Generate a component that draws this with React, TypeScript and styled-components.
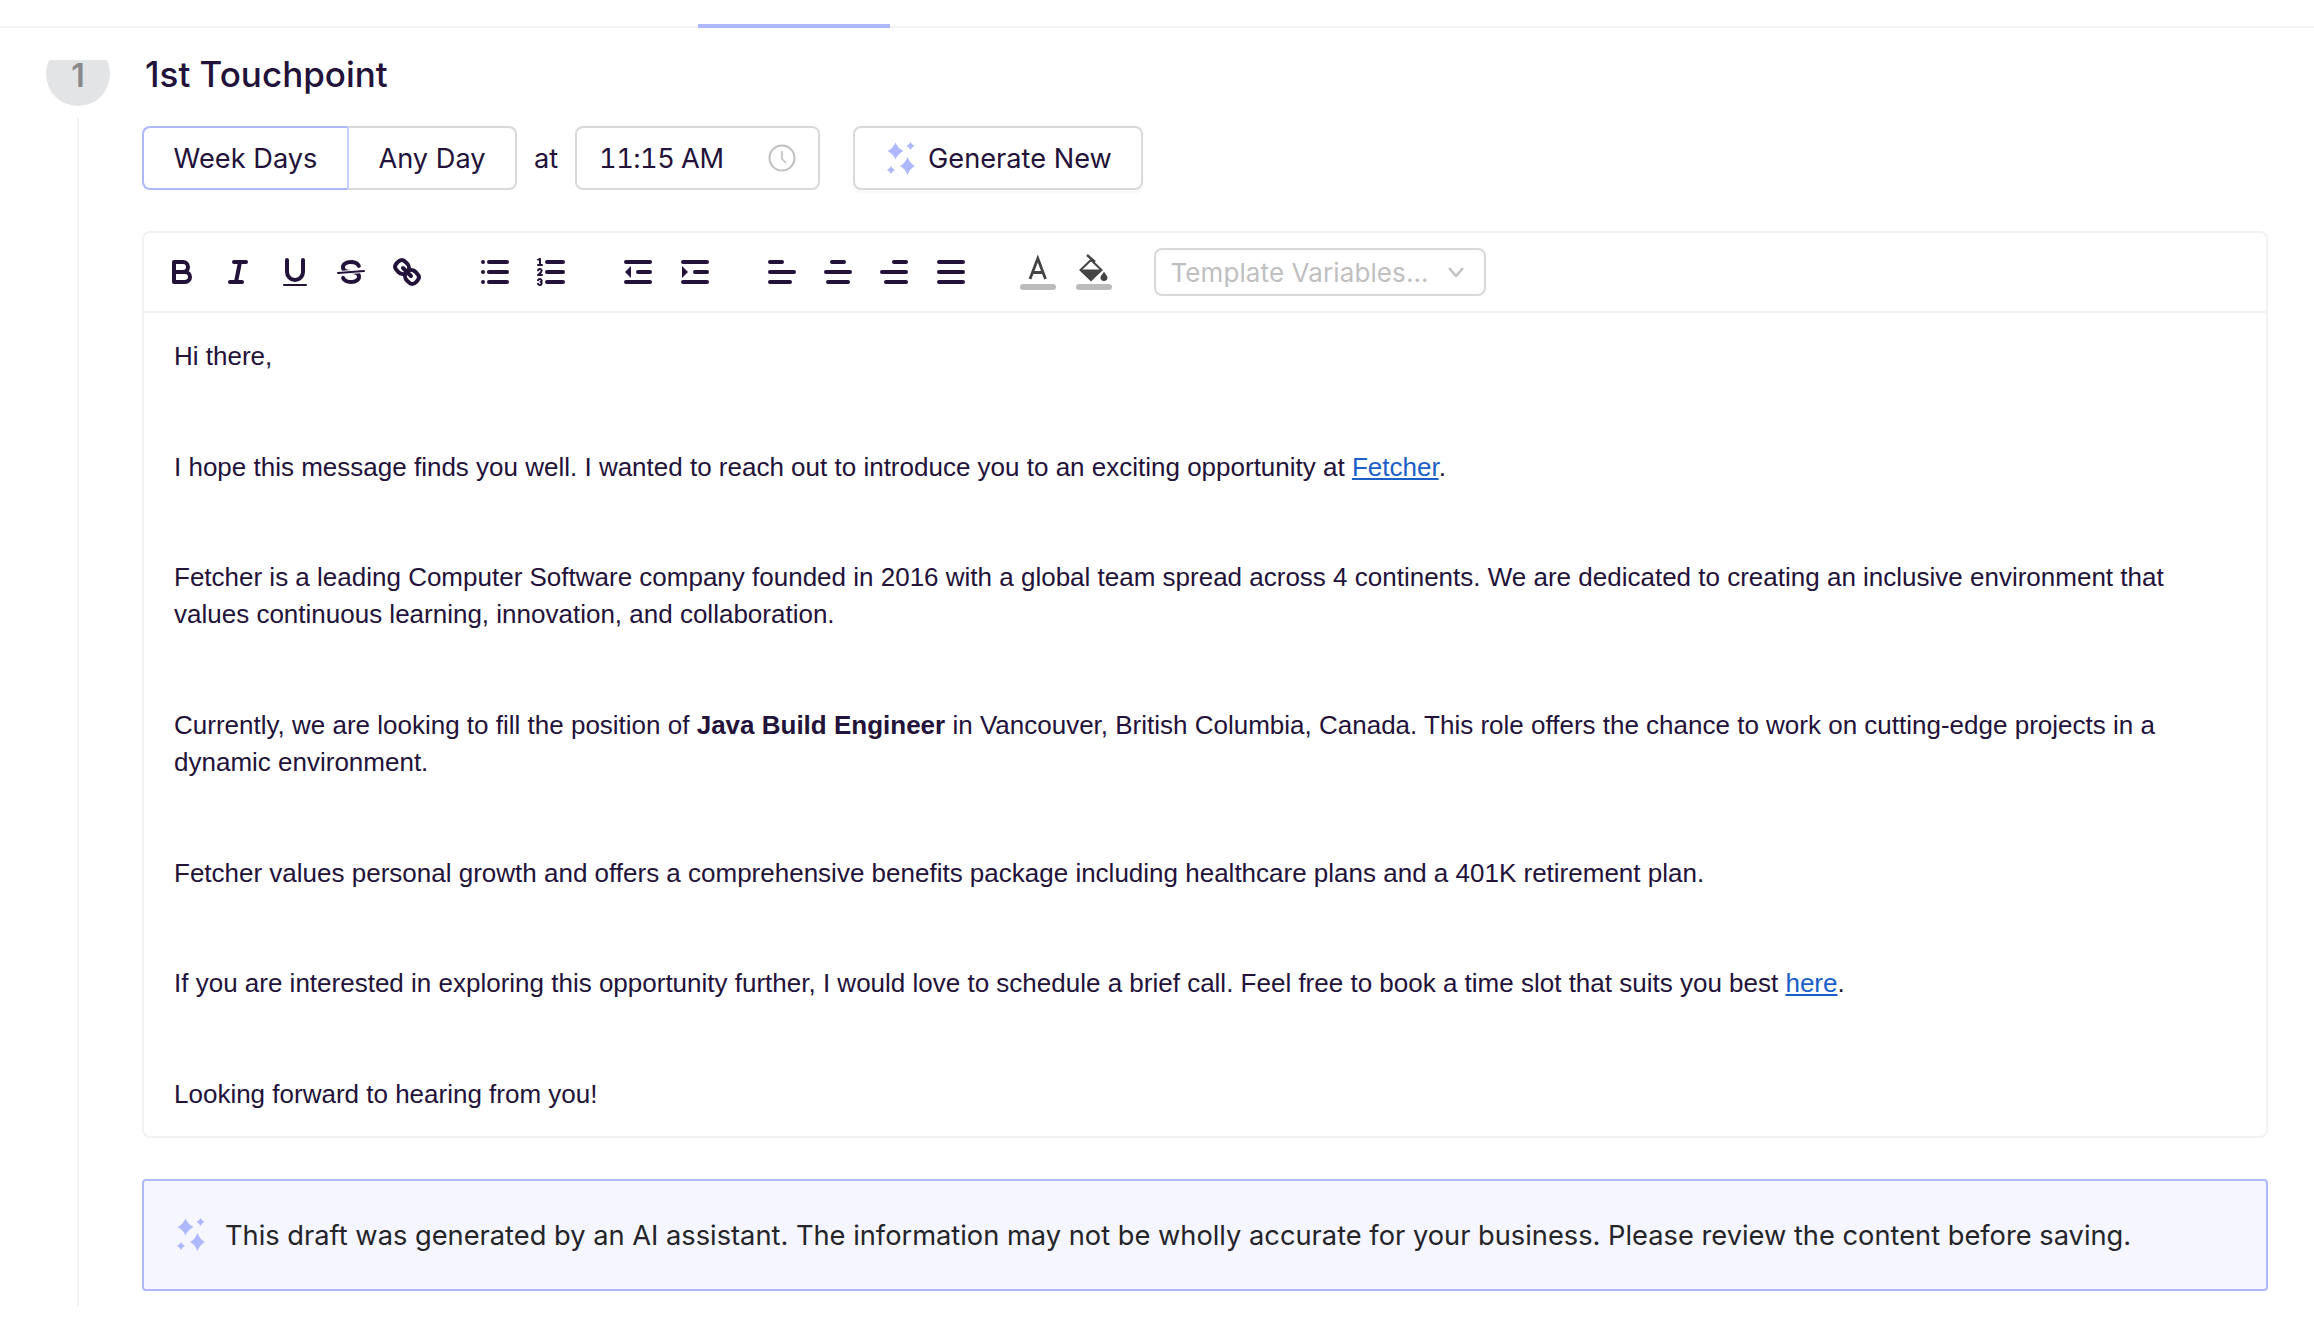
import styled, { createGlobalStyle } from 'styled-components'
import type React from 'react'

/**
 * Constants
 */
const INK = '#231239'
const PERIWINKLE = '#adb8ff'
const HAIRLINE = '#f2f2f2'
const CONTROL_BORDER = '#d9d9d9'

/**
 * Style
 */
const GlobalStyle = createGlobalStyle`
  html, body {
    margin: 0;
    padding: 0;
    background: #fff;
  }

  * {
    box-sizing: border-box;
  }
`

const Page = styled.div`
  width: 2314px;
  height: 1334px;
  overflow: hidden;
  font-family: Inter, "Liberation Sans", sans-serif;
  color: ${INK};
`

const TopBar = styled.div`
  position: relative;
  height: 28px;
  border-bottom: 2px solid ${HAIRLINE};
`

const ActiveTab = styled.div`
  position: absolute;
  left: 698px;
  bottom: -2px;
  width: 192px;
  height: 4px;
  background: ${PERIWINKLE};
`

const Step = styled.section`
  display: flex;
  gap: 32px;
  padding: 24px 46px 0 46px;
`

const Timeline = styled.div`
  display: flex;
  flex-direction: column;
  align-items: center;
  width: 64px;
  padding-top: 8px;
`

const BadgeClip = styled.div`
  width: 64px;
  height: 46px;
  overflow: hidden;
`

const Badge = styled.div`
  display: flex;
  align-items: center;
  justify-content: center;
  width: 64px;
  height: 64px;
  margin-top: -18px;
  padding-top: 2px;
  border-radius: 50%;
  background: #e3e4e6;
  color: #89898c;
  font-size: 32px;
  font-weight: 600;
`

const Rail = styled.div`
  width: 2px;
  height: 1188px;
  margin-top: 12px;
  background: ${HAIRLINE};
`

const Main = styled.div`
  flex: 1;
  min-width: 0;
`

const Title = styled.h2`
  margin: 0 0 30px;
  padding-left: 3px;
  font-size: 35px;
  font-weight: 500;
  line-height: 44px;
`

const Controls = styled.div`
  display: flex;
  align-items: center;
  height: 64px;
  font-size: 27.2px;
`

const Segments = styled.div`
  display: flex;
  height: 64px;
`

const Segment = styled.div<{ $active?: boolean }>`
  display: flex;
  align-items: center;
  justify-content: center;
  border: 2px solid ${props => (props.$active ? PERIWINKLE : CONTROL_BORDER)};
  border-left-width: ${props => (props.$active ? '2px' : '0')};
  border-right-color: ${props => (props.$active ? '#c6cfff' : CONTROL_BORDER)};
  border-radius: ${props => (props.$active ? '8px 0 0 8px' : '0 8px 8px 0')};
  width: ${props => (props.$active ? '207px' : '168px')};
`

const AtLabel = styled.span`
  width: 58px;
  text-align: center;
`

const TimeField = styled.div`
  display: flex;
  align-items: center;
  justify-content: space-between;
  width: 245px;
  height: 64px;
  padding: 0 22px;
  border: 2px solid ${CONTROL_BORDER};
  border-radius: 8px;
  font-variant-numeric: tabular-nums;
  letter-spacing: -0.5px;
`

const GenerateButton = styled.div`
  display: flex;
  align-items: center;
  gap: 13px;
  width: 290px;
  height: 64px;
  margin-left: 33px;
  padding-left: 32px;
  border: 2px solid ${CONTROL_BORDER};
  border-radius: 8px;
  box-shadow: 0 4px 0 rgba(0, 0, 0, 0.02);
`

const Editor = styled.div`
  margin-top: 41px;
  border: 2px solid ${HAIRLINE};
  border-radius: 8px;
`

const Toolbar = styled.div`
  display: flex;
  align-items: center;
  gap: 31px;
  height: 80px;
  padding: 0 10px;
  border-bottom: 2px solid ${HAIRLINE};
`

const ToolGroup = styled.div`
  display: flex;
`

const ToolButton = styled.div`
  display: flex;
  justify-content: center;
  width: 56.3px;
  height: 48px;
  padding-top: 6px;
`

const QuillIcon = styled.svg`
  width: 36px;
  height: 36px;
  fill: none;
  stroke: ${INK};
  stroke-width: 2;
  stroke-linecap: round;
  stroke-linejoin: round;
`

const Filled = styled.path`
  fill: ${INK};
  stroke: none;
`

const VariableSelect = styled.div`
  display: flex;
  align-items: center;
  justify-content: space-between;
  width: 332px;
  height: 48px;
  margin-left: 1px;
  padding: 0 19px 0 14px;
  border: 2px solid ${CONTROL_BORDER};
  border-radius: 8px;
  color: #bfbfbf;
  font-size: 26px;
  letter-spacing: 0.1px;
`

const Body = styled.div`
  padding: 25px 30px 23px 30px;
  font-family: "Liberation Sans", Arial, sans-serif;
  font-size: 26px;
  line-height: 36.9px;
`

const Para = styled.p`
  margin: 0 0 73.8px;

  &:last-child {
    margin-bottom: 0;
  }

  a {
    color: #1a5fc8;
    text-decoration: underline;
  }
`

const Notice = styled.div`
  display: flex;
  align-items: center;
  gap: 20px;
  height: 112px;
  margin-top: 41px;
  padding-left: 33px;
  border: 2px solid ${PERIWINKLE};
  border-radius: 4px;
  background: #f5f6ff;
  color: #242429;
  font-size: 27.25px;
`

const NoticeText = styled.span`
  padding-top: 2px;
`

/**
 * Icons
 */
const Sparkles = (): React.JSX.Element => (
  <svg width="28" height="33" viewBox="0 0 28 33" fill={PERIWINKLE}>
    <path d="M8.500 0.500 Q11 6.500 16.500 9 Q11 11.500 8.500 17.500 Q6 11.500 0.500 9 Q6 6.500 8.500 0.500Z" />
    <path d="M23.500 0 Q24.700 2.800 27.500 4 Q24.700 5.200 23.500 8 Q22.300 5.200 19.500 4 Q22.300 2.800 23.500 0Z" />
    <path d="M20.500 15 Q23 21.500 28 24 Q23 26.500 20.500 33 Q18 26.500 13 24 Q18 21.500 20.500 15Z" />
    <path d="M4 24 Q5.200 26.800 8 28 Q5.200 29.200 4 32 Q2.800 29.200 0 28 Q2.800 26.800 4 24Z" />
  </svg>
)

const Clock = (): React.JSX.Element => (
  <svg width="28" height="28" viewBox="0 0 28 28" fill="none" stroke="#bfbfbf" strokeWidth="2">
    <circle cx="14" cy="14" r="12.5" />
    <path d="M14 7v8l4 4" strokeWidth="1.6" />
  </svg>
)

const Chevron = (): React.JSX.Element => (
  <svg width="18" height="12" viewBox="0 0 18 12" fill="none" stroke="#bfbfbf" strokeWidth="2.4">
    <path d="M2 2l7 8 7-8" />
  </svg>
)

const TextColorIcon = (): React.JSX.Element => (
  <svg width="36" height="40" viewBox="0 0 36 40">
    <path d="M10 25L17.800 4.500L25.500 25M12.500 18.500H23" fill="none" stroke="#444" strokeWidth="2.800" />
    <rect x="0" y="30" width="36" height="6" rx="3" fill="#bbb" />
  </svg>
)

const FillColorIcon = (): React.JSX.Element => (
  <svg width="36" height="40" viewBox="0 0 36 40">
    <path d="M11 1L19 8" stroke="#444" strokeWidth="2.400" fill="none" />
    <path d="M15 6L25.500 16L15 26L4.500 16Z" fill="#fff" stroke="#444" strokeWidth="2" />
    <path d="M4.500 15.500H25.500L15 26Z" fill="#444" />
    <path d="M28 17.500C29.500 20.500 31.500 21.500 31.500 23.500A3.500 3.500 0 0 1 24.500 23.500C24.500 21.500 26.500 20.500 28 17.500Z" fill="#444" />
    <rect x="0" y="30" width="36" height="6" rx="3" fill="#bbb" />
  </svg>
)

const hLine = (x1: number, x2: number, y: number): React.JSX.Element => (
  <line key={`${x1}-${x2}-${y}`} x1={x1} x2={x2} y1={y} y2={y} />
)

const icons: Record<string, React.ReactNode> = {
  bold: (
    <>
      <path d="M5,4H9.5A2.5,2.5,0,0,1,12,6.5v0A2.5,2.5,0,0,1,9.5,9H5A0,0,0,0,1,5,9V4A0,0,0,0,1,5,4Z" />
      <path d="M5,9h5.500A2.500,2.500,0,0,1,13,11.500v0A2.500,2.500,0,0,1,10.500,14H5a0,0,0,0,1,0,0V9A0,0,0,0,1,5,9Z" />
    </>
  ),
  italic: (
    <>
      {hLine(7, 13, 4)}
      {hLine(5, 11, 14)}
      <line x1="8" x2="10" y1="14" y2="4" />
    </>
  ),
  underline: (
    <>
      <path d="M5,3V9a4.012,4.012,0,0,0,4,4H9a4.012,4.012,0,0,0,4-4V3" />
      <Filled as="rect" x="3" y="15" width="12" height="1" rx="0.5" />
    </>
  ),
  strike: (
    <>
      <line x1="15.5" x2="2.5" y1="8.5" y2="9.5" strokeWidth="1" />
      <Filled d="M9.007,8C6.542,7.791,6,7.519,6,6.5,6,5.792,7.283,5,9,5c1.571,0,2.765.679,2.969,1.309a1,1,0,0,0,1.9-.617C13.356,4.106,11.354,3,9,3,6.2,3,4,4.538,4,6.5a3.2,3.2,0,0,0,.5,1.843Z" />
      <Filled d="M8.984,10C11.457,10.208,12,10.479,12,11.5c0,.708-1.283,1.5-3,1.5-1.571,0-2.765-.679-2.969-1.309a1,1,0,1,0-1.9.617C4.644,13.894,6.646,15,9,15c2.8,0,5-1.538,5-3.5a3.2,3.2,0,0,0-.5-1.843Z" />
    </>
  ),
  link: (
    <>
      <line x1="7" x2="11" y1="7" y2="11" />
      <path d="M8.9,4.577a3.476,3.476,0,0,1,.36,4.679A3.476,3.476,0,0,1,4.577,8.9C3.185,7.5,2.035,6.4,4.217,4.217S7.5,3.185,8.9,4.577Z" />
      <path d="M13.423,9.1a3.476,3.476,0,0,0-4.679-.36,3.476,3.476,0,0,0,.36,4.679c1.392,1.392,2.5,2.542,4.679.36S14.815,10.5,13.423,9.1Z" />
    </>
  ),
  bullet: (
    <>
      {hLine(6, 15, 4)}
      {hLine(6, 15, 9)}
      {hLine(6, 15, 14)}
      {hLine(3, 3, 4)}
      {hLine(3, 3, 9)}
      {hLine(3, 3, 14)}
    </>
  ),
  ordered: (
    <>
      {hLine(7, 15, 4)}
      {hLine(7, 15, 9)}
      {hLine(7, 15, 14)}
      <line x1="2.5" x2="4.5" y1="5.5" y2="5.5" strokeWidth="1" />
      <Filled d="M3.5,6A0.5,0.5,0,0,1,3,5.5V3.085l-0.276.138A0.5,0.5,0,0,1,2.053,3c-0.124-.247-0.023-0.324.224-0.447l1-.5A0.5,0.5,0,0,1,4,2.5v3A0.5,0.5,0,0,1,3.5,6Z" />
      <path strokeWidth="1" d="M4.5,10.5h-2c0-.234,1.85-1.076,1.85-2.234A0.959,0.959,0,0,0,2.5,8.156" />
      <path strokeWidth="1" d="M2.5,14.846a0.959,0.959,0,0,0,1.85-.109A0.7,0.7,0,0,0,3.75,14a0.688,0.688,0,0,0,.6-0.736,0.959,0.959,0,0,0-1.85-.109" />
    </>
  ),
  outdent: (
    <>
      {hLine(3, 15, 14)}
      {hLine(3, 15, 4)}
      {hLine(9, 15, 9)}
      <Filled as="polygon" points="5.500 6 5.500 12 2.500 9" />
    </>
  ),
  indent: (
    <>
      {hLine(3, 15, 14)}
      {hLine(3, 15, 4)}
      {hLine(9, 15, 9)}
      <Filled as="polygon" points="2.500 6 2.500 12 5.500 9" />
    </>
  ),
  alignLeft: (
    <>
      {hLine(3, 15, 9)}
      {hLine(3, 13, 14)}
      {hLine(3, 9, 4)}
    </>
  ),
  alignCenter: (
    <>
      {hLine(3, 15, 9)}
      {hLine(4, 14, 14)}
      {hLine(6, 12, 4)}
    </>
  ),
  alignRight: (
    <>
      {hLine(3, 15, 9)}
      {hLine(5, 15, 14)}
      {hLine(9, 15, 4)}
    </>
  ),
  justify: (
    <>
      {hLine(3, 15, 9)}
      {hLine(3, 15, 14)}
      {hLine(3, 15, 4)}
    </>
  )
}

const toolGroups: string[][] = [
  ['bold', 'italic', 'underline', 'strike', 'link'],
  ['bullet', 'ordered'],
  ['outdent', 'indent'],
  ['alignLeft', 'alignCenter', 'alignRight', 'justify']
]

/**
 * Component
 */
const App = (): React.JSX.Element => {
  return (
    <Page>
      <GlobalStyle />
      <TopBar>
        <ActiveTab />
      </TopBar>
      <Step>
        <Timeline>
          <BadgeClip>
            <Badge>1</Badge>
          </BadgeClip>
          <Rail />
        </Timeline>
        <Main>
          <Title>1st Touchpoint</Title>
          <Controls>
            <Segments>
              <Segment $active>Week Days</Segment>
              <Segment>Any Day</Segment>
            </Segments>
            <AtLabel>at</AtLabel>
            <TimeField>
              11:15 AM
              <Clock />
            </TimeField>
            <GenerateButton>
              <Sparkles />
              Generate New
            </GenerateButton>
          </Controls>
          <Editor>
            <Toolbar>
              {toolGroups.map(group => (
                <ToolGroup key={group[0]}>
                  {group.map(name => (
                    <ToolButton key={name}>
                      <QuillIcon viewBox="0 0 18 18">{icons[name]}</QuillIcon>
                    </ToolButton>
                  ))}
                </ToolGroup>
              ))}
              <ToolGroup>
                <ToolButton>
                  <TextColorIcon />
                </ToolButton>
                <ToolButton>
                  <FillColorIcon />
                </ToolButton>
              </ToolGroup>
              <VariableSelect>
                Template Variables...
                <Chevron />
              </VariableSelect>
            </Toolbar>
            <Body>
              <Para>Hi there,</Para>
              <Para>
                I hope this message finds you well. I wanted to reach out to introduce you to an exciting opportunity at <a href="#fetcher">Fetcher</a>.
              </Para>
              <Para>
                Fetcher is a leading Computer Software company founded in 2016 with a global team spread across 4 continents. We are dedicated to creating an inclusive environment that values continuous learning, innovation, and collaboration.
              </Para>
              <Para>
                Currently, we are looking to fill the position of <strong>Java Build Engineer</strong> in Vancouver, British Columbia, Canada. This role offers the chance to work on cutting-edge projects in a dynamic environment.
              </Para>
              <Para>
                Fetcher values personal growth and offers a comprehensive benefits package including healthcare plans and a 401K retirement plan.
              </Para>
              <Para>
                If you are interested in exploring this opportunity further, I would love to schedule a brief call. Feel free to book a time slot that suits you best <a href="#here">here</a>.
              </Para>
              <Para>Looking forward to hearing from you!</Para>
            </Body>
          </Editor>
          <Notice>
            <Sparkles />
            <NoticeText>
              This draft was generated by an AI assistant. The information may not be wholly accurate for your business. Please review the content before saving.
            </NoticeText>
          </Notice>
        </Main>
      </Step>
    </Page>
  )
}

export default App
